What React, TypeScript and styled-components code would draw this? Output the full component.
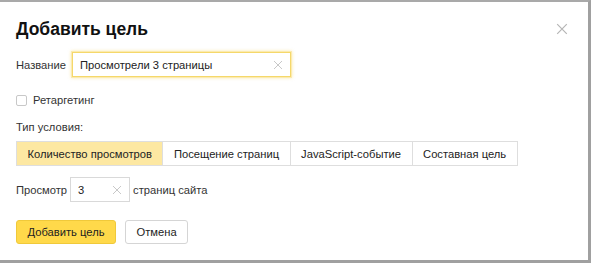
import React from "react";
import styled, { createGlobalStyle } from "styled-components";

const GlobalStyle = createGlobalStyle`
  html, body {
    margin: 0;
    padding: 0;
    background: #fff;
  }
  body {
    font-family: "Liberation Sans", Arial, sans-serif;
    color: #000;
  }
`;

const tabs = [
  "Количество просмотров",
  "Посещение страниц",
  "JavaScript-событие",
  "Составная цель",
];

const CrossIcon = ({ size, color }: { size: number; color: string }) => (
  <svg width={size} height={size} viewBox="0 0 10 10">
    <path d="M1 1L9 9M9 1L1 9" stroke={color} strokeWidth="1" fill="none" />
  </svg>
);

const App = () => {
  return (
    <>
      <GlobalStyle />
      <Frame>
        <Header>
          <Title>Добавить цель</Title>
          <CloseButton>
            <CrossIcon size={12} color="#b5b5b5" />
          </CloseButton>
        </Header>

        <Row gap={6}>
          <Label>Название</Label>
          <Input width={219} focused>
            <InputText>Просмотрели 3 страницы</InputText>
            <CrossIcon size={10} color="#c8c8c8" />
          </Input>
        </Row>

        <CheckRow>
          <CheckBox />
          <span>Ретаргетинг</span>
        </CheckRow>

        <Caption>Тип условия:</Caption>
        <Tabs>
          {tabs.map((t, i) => (
            <Tab key={t} active={i === 0}>
              {t}
            </Tab>
          ))}
        </Tabs>

        <Row gap={3} top={11}>
          <Label>Просмотр</Label>
          <Input width={60}>
            <InputText>3</InputText>
            <CrossIcon size={10} color="#c8c8c8" />
          </Input>
          <Label>страниц сайта</Label>
        </Row>

        <Footer>
          <Button primary>Добавить цель</Button>
          <Button>Отмена</Button>
        </Footer>
      </Frame>
    </>
  );
};

export default App;

const Frame = styled.div`
  box-sizing: border-box;
  width: 591px;
  height: 263px;
  border-top: 2px solid #a9a9a9;
  border-right: 3px solid #a0a0a0;
  border-bottom: 3px solid #a0a0a0;
  padding: 0 0 0 16px;
  display: flex;
  flex-direction: column;
  font-size: 11.2px;
`;

const Header = styled.div`
  display: flex;
  justify-content: space-between;
  align-items: center;
  padding: 14px 20px 0 0;
  height: 27px;
`;

const Title = styled.h1`
  margin: 0;
  font-size: 17.5px;
  font-weight: bold;
  color: #111;
`;

const CloseButton = styled.div`
  display: flex;
  width: 12px;
  height: 12px;
  margin-top: -2px;
`;

const Row = styled.div<{ gap: number; top?: number }>`
  display: flex;
  align-items: center;
  gap: ${({ gap }) => gap}px;
  margin-top: ${({ top }) => top ?? 9}px;
`;

const Label = styled.span`
  font-size: 11.2px;
  color: #333;
`;

const Input = styled.div<{ width: number; focused?: boolean }>`
  box-sizing: border-box;
  width: ${({ width }) => width}px;
  height: 25px;
  display: flex;
  align-items: center;
  justify-content: space-between;
  padding: 0 7px 0 7px;
  border: 1px solid ${({ focused }) => (focused ? "#f5d86a" : "#d9d9d9")};
  box-shadow: ${({ focused }) =>
    focused ? "0 0 0 1px #fbeab0, 0 0 3px 1px rgba(250, 215, 90, 0.5)" : "none"};
  background: #fff;
`;

const InputText = styled.span`
  font-size: 11.2px;
  color: #222;
`;

const CheckRow = styled.label`
  display: flex;
  align-items: center;
  gap: 6px;
  margin-top: 17px;
  font-size: 11.2px;
  color: #333;
`;

const CheckBox = styled.span`
  box-sizing: border-box;
  width: 11px;
  height: 11px;
  border: 1px solid #c8c8c8;
  border-radius: 2px;
  background: #fff;
`;

const Caption = styled.div`
  margin-top: 15px;
  font-size: 11.2px;
  color: #333;
`;

const Tabs = styled.div`
  display: flex;
  margin-top: 8px;
  align-self: flex-start;
  border: 1px solid #dedede;
`;

const Tab = styled.div<{ active?: boolean }>`
  height: 23px;
  display: flex;
  align-items: center;
  padding: 0 10.5px;
  font-size: 11.2px;
  color: #222;
  background: ${({ active }) => (active ? "#fde8a2" : "#fff")};
  border-left: ${({ active }) => (active ? "none" : "1px solid #dedede")};
  &:first-child {
    border-left: none;
  }
`;

const Footer = styled.div`
  display: flex;
  gap: 9px;
  margin-top: 18px;
`;

const Button = styled.div<{ primary?: boolean }>`
  box-sizing: border-box;
  height: 24px;
  display: flex;
  align-items: center;
  padding: 0 10.5px;
  font-size: 11.2px;
  color: #222;
  border-radius: 3px;
  background: ${({ primary }) => (primary ? "#ffd94a" : "#fff")};
  border: 1px solid ${({ primary }) => (primary ? "#f0c93a" : "#d5d5d5")};
`;
